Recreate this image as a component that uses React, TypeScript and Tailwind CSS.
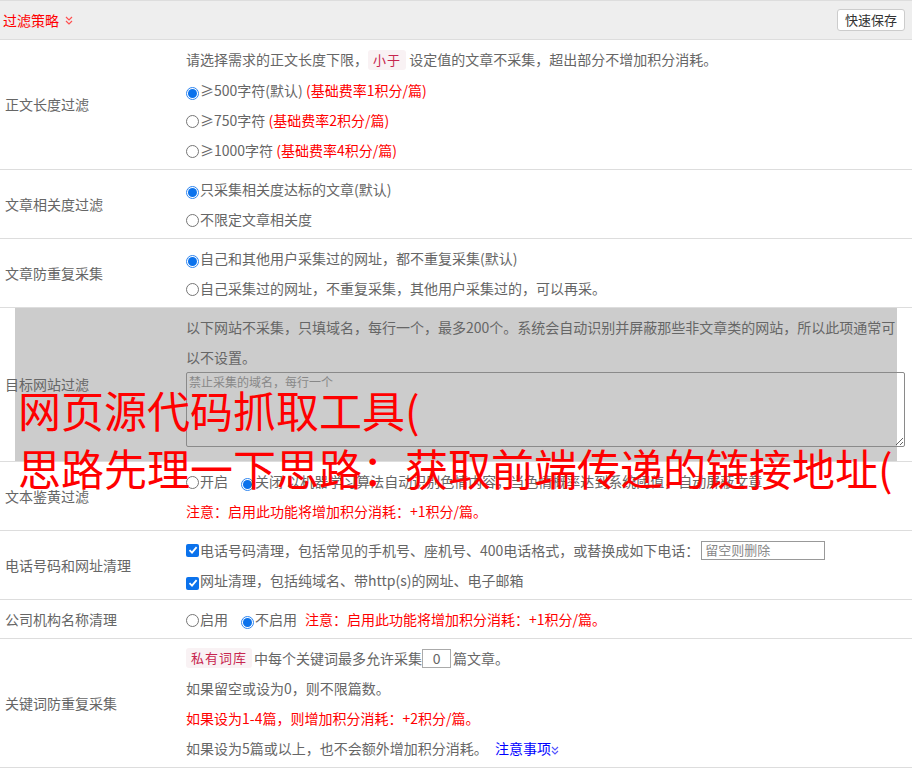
import type { ReactNode } from 'react';

function Radio({ checked = false }: { checked?: boolean }) {
  return checked ? (
    <span className="inline-flex w-[13px] h-[13px] rounded-full bg-white border border-[#2f86f0] align-[-2px] mr-[1px] items-center justify-center">
      <span className="w-[9px] h-[9px] rounded-full bg-[#0b72ec]" />
    </span>
  ) : (
    <span className="inline-block w-[13px] h-[13px] rounded-full bg-white border border-[#767676] align-[-2px] mr-[1px]" />
  );
}

function Checkbox() {
  return (
    <span className="inline-flex w-[13px] h-[13px] rounded-[2px] bg-[#0b72ec] align-[-2px] mr-[1px] items-center justify-center">
      <svg width="10" height="10" viewBox="0 0 10 10">
        <path d="M1.5 5.2 L4 7.6 L8.6 2.2" fill="none" stroke="#fff" strokeWidth="1.8" />
      </svg>
    </span>
  );
}

function Chevrons({ color }: { color: string }) {
  return (
    <svg width="8" height="9" viewBox="0 0 8 9" className="inline-block">
      <path d="M1 1 L4 4 L7 1 M1 5 L4 8 L7 5" fill="none" stroke={color} strokeWidth="1.2" />
    </svg>
  );
}

function Pill({ children }: { children: ReactNode }) {
  return (
    <span className="inline-block bg-[#f9f2f4] text-[#c7254e] text-[13px] leading-[20px] px-[5px] rounded-[3px] tracking-[1px]">
      {children}
    </span>
  );
}

function Row({ label, children, shaded = false }: { label: string; children: ReactNode; shaded?: boolean }) {
  return (
    <div className="relative grid grid-cols-[186px_1fr] border-b border-[#dddddd]">
      {shaded && <div className="absolute top-0 bottom-0 left-[15px] right-[15px] bg-[#cccccc]" />}
      <div className="relative flex items-center pl-[5px]">{label}</div>
      <div className="relative pt-[4px] pb-[4px] pr-[7px] leading-[30px]">{children}</div>
    </div>
  );
}

export default function App() {
  return (
    <div className="relative w-[912px] h-[768px] overflow-hidden bg-white text-[14px] text-[#666] font-['Noto_Sans_CJK_SC',sans-serif]">
      <div className="flex items-center justify-between h-[40px] bg-[#eeeeee] border-t border-b border-[#dddddd] pl-[3px] pr-[7px]">
        <div className="flex items-center gap-[6px] text-[#ff0000]">
          <span>过滤策略</span>
          <Chevrons color="#ff5050" />
        </div>
        <button className="w-[68px] h-[22px] bg-white border border-[#cccccc] rounded-[3px] text-[13px] text-[#333] leading-[20px]">
          快速保存
        </button>
      </div>

      <Row label="正文长度过滤">
        <div className="leading-[31px]">
          请选择需求的正文长度下限，<Pill>小于</Pill> 设定值的文章不采集，超出部分不增加积分消耗。
        </div>
        <div>
          <Radio checked />≥500字符(默认) <span className="text-[#ff0000]">(基础费率1积分/篇)</span>
        </div>
        <div>
          <Radio />≥750字符 <span className="text-[#ff0000]">(基础费率2积分/篇)</span>
        </div>
        <div>
          <Radio />≥1000字符 <span className="text-[#ff0000]">(基础费率4积分/篇)</span>
        </div>
      </Row>

      <Row label="文章相关度过滤">
        <div>
          <Radio checked />只采集相关度达标的文章(默认)
        </div>
        <div>
          <Radio />不限定文章相关度
        </div>
      </Row>

      <Row label="文章防重复采集">
        <div>
          <Radio checked />自己和其他用户采集过的网址，都不重复采集(默认)
        </div>
        <div>
          <Radio />自己采集过的网址，不重复采集，其他用户采集过的，可以再采。
        </div>
      </Row>

      <Row label="目标网站过滤" shaded>
        <div>
          以下网站不采集，只填域名，每行一个，最多200个。系统会自动识别并屏蔽那些非文章类的网站，所以此项通常可
          <br />
          以不设置。
        </div>
        <textarea
          placeholder="禁止采集的域名，每行一个"
          className="block w-full h-[75px] mb-[10px] bg-transparent border border-[#8a8a8a] rounded-[2px] px-[2px] py-[1px] text-[12px] leading-[16px] placeholder:text-[#888]"
        />
      </Row>

      <Row label="文本鉴黄过滤">
        <div>
          <Radio />
          <span className="mr-[13px]">开启</span>
          <Radio checked />关闭 以机器学习算法自动识别色情内容，当色情概率达到系统阈值，自动屏蔽文章
        </div>
        <div className="text-[#ff0000]">注意：启用此功能将增加积分消耗：+1积分/篇。</div>
      </Row>

      <Row label="电话号码和网址清理">
        <div className="flex items-center h-[30px]">
          <Checkbox />
          <span>电话号码清理，包括常见的手机号、座机号、400电话格式，或替换成如下电话：</span>
          <input
            placeholder="留空则删除"
            className="ml-[2px] w-[124px] h-[19px] border border-[#999] px-[3px] text-[13px] placeholder:text-[#888]"
          />
        </div>
        <div>
          <Checkbox />网址清理，包括纯域名、带http(s)的网址、电子邮箱
        </div>
      </Row>

      <Row label="公司机构名称清理">
        <div>
          <Radio />
          <span className="mr-[13px]">启用</span>
          <Radio checked />
          <span className="mr-[8px]">不启用</span>
          <span className="text-[#ff0000]">注意：启用此功能将增加积分消耗：+1积分/篇。</span>
        </div>
      </Row>

      <Row label="关键词防重复采集">
        <div className="flex items-center h-[30px]">
          <Pill>私有词库</Pill>
          <span className="ml-[2px]">中每个关键词最多允许采集</span>
          <input
            defaultValue="0"
            className="w-[29px] h-[19px] border border-[#aaa] text-center text-[14px] text-[#666]"
          />
          <span className="ml-[2px]">篇文章。</span>
        </div>
        <div>如果留空或设为0，则不限篇数。</div>
        <div className="text-[#ff0000]">如果设为1-4篇，则增加积分消耗：+2积分/篇。</div>
        <div>
          如果设为5篇或以上，也不会额外增加积分消耗。{' '}
          <span className="ml-[4px] text-[#0000ff]">注意事项</span>
          <Chevrons color="#5555ff" />
        </div>
      </Row>

      <div className="absolute left-[18px] top-[380px] text-[43px] leading-[58px] text-[#ff0000] whitespace-nowrap pointer-events-none">
        <div>网页源代码抓取工具(</div>
        <div>思路先理一下思路：获取前端传递的链接地址(</div>
      </div>
    </div>
  );
}
